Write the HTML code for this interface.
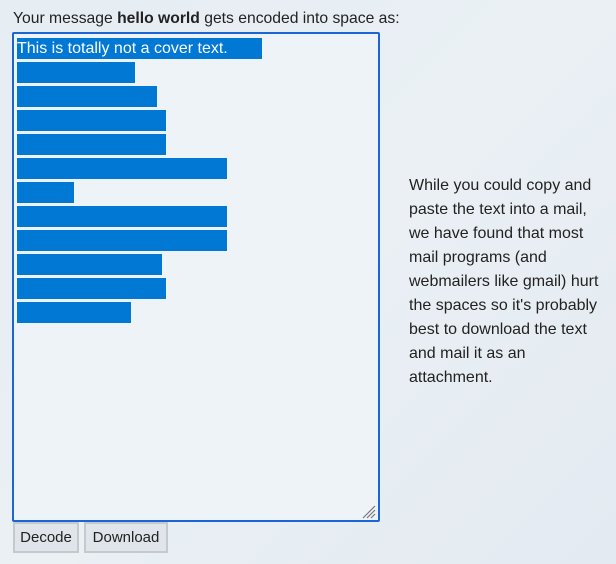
<!DOCTYPE html>
<html><head><meta charset="utf-8"><style>
body{margin:0;width:616px;height:564px;background:linear-gradient(135deg,#e6edf3,#eaf0f4 50%,#e3eaf1);font-family:"Segoe UI","Liberation Sans",sans-serif;color:#222;position:relative;overflow:hidden}
.h{position:absolute;left:13px;top:10px;font-size:15.7px;white-space:nowrap}
.ta{position:absolute;left:12px;top:32px;width:364px;height:486px;border:2px solid #1a66d6;border-radius:2px;background:#edf3f7}
.b{position:absolute;left:17px;height:21px;background:#0078d4;color:#fff;font-size:16px;line-height:21px;white-space:nowrap}
.btn{position:absolute;top:522px;height:27px;border:2px solid #c3c9cd;background:#dfe5ea;font-size:15px;line-height:27px;text-align:center;color:#222;box-sizing:content-box}
.p{position:absolute;left:409px;top:174px;font-size:16px;line-height:24px;white-space:nowrap;color:#222}
</style></head><body>
<div class="h">Your message <b>hello world</b> gets encoded into space as:</div>
<div class="ta"></div>
<div class="b" style="top:38px;width:245px">This is totally not a cover text.</div>
<div class="b" style="top:62px;width:118px"></div>
<div class="b" style="top:86px;width:140px"></div>
<div class="b" style="top:110px;width:149px"></div>
<div class="b" style="top:134px;width:149px"></div>
<div class="b" style="top:158px;width:210px"></div>
<div class="b" style="top:182px;width:57px"></div>
<div class="b" style="top:206px;width:210px"></div>
<div class="b" style="top:230px;width:210px"></div>
<div class="b" style="top:254px;width:145px"></div>
<div class="b" style="top:278px;width:149px"></div>
<div class="b" style="top:302px;width:114px"></div>
<svg style="position:absolute;left:361px;top:504px" width="16" height="16"><path d="M14 2L2 14M14 6L6 14M14 10L10 14" stroke="#777" stroke-width="1.2"/></svg>
<div class="btn" style="left:13px;width:62px">Decode</div>
<div class="btn" style="left:84px;width:80px">Download</div>
<div class="p">While you could copy and<br>paste the text into a mail,<br>we have found that most<br>mail programs (and<br>webmailers like gmail) hurt<br>the spaces so it's probably<br>best to download the text<br>and mail it as an<br>attachment.</div>
</body></html>
